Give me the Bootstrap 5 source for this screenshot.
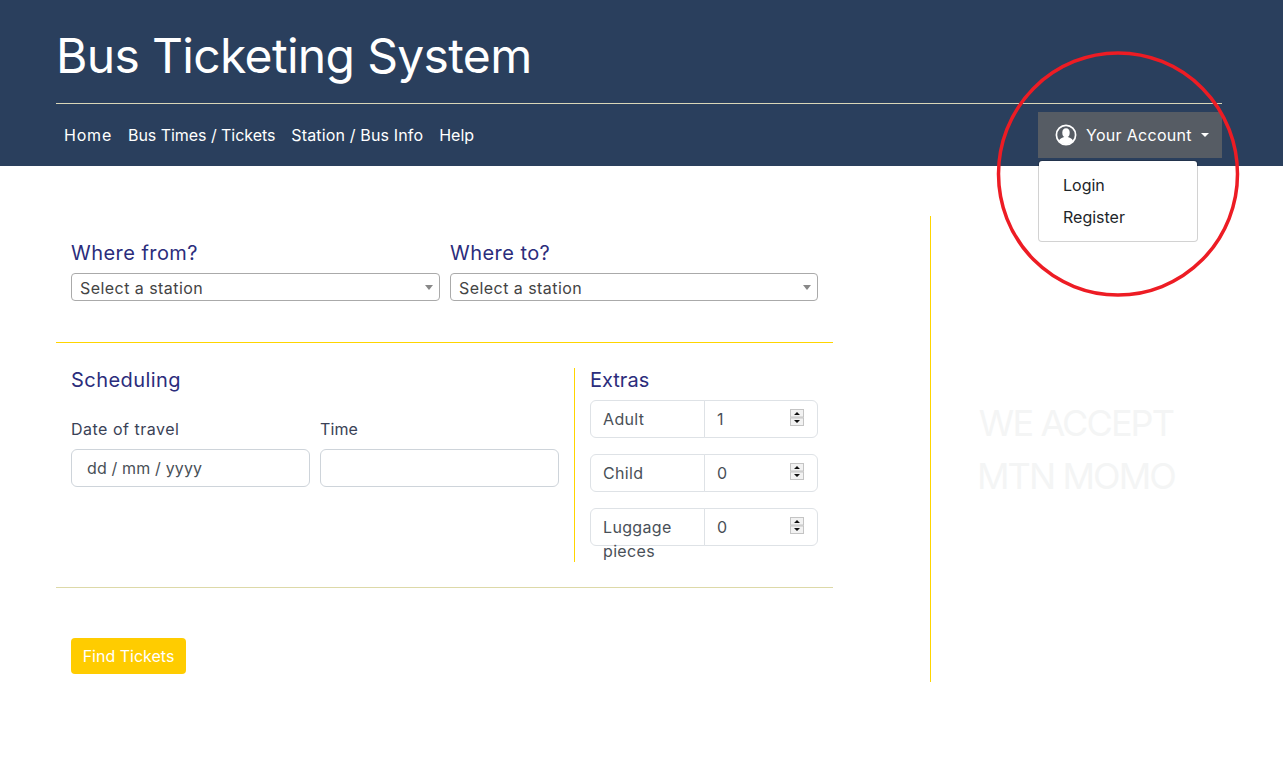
<!DOCTYPE html>
<html lang="en">
<head>
    <meta charset="UTF-8">
    <meta name="viewport" content="width=device-width, initial-scale=1.0">
    <title>Bus Ticketing System</title>
    <link href="https://cdn.jsdelivr.net/npm/bootstrap@5.3.0/dist/css/bootstrap.min.css" rel="stylesheet">
    <style>
        body { font-family: "Inter", "Open Sans", sans-serif; color: #495057; height: 768px; overflow: hidden; position: relative; }
        .site-head { background: #2a3f5d; height: 166px; padding: 27px 61px 0 56px; }
        .site-title { font-size: 48px; font-weight: 400; line-height: 57.6px; color: #fff; margin: 0; letter-spacing: -.67px; }
        .head-rule { height: 1px; background: #d9d6b8; margin-top: 18px; margin-bottom: 8px; }
        .site-head .nav-link { color: #fff; padding: 8px; font-size: 16px; line-height: 30px; }
        .site-head .link-home { letter-spacing: .8px; }
        .site-head .link-times { letter-spacing: -.05px; }
        .site-head .link-station { letter-spacing: .15px; }
        .account-btn { background: #565c64; color: #fff; width: 184px; height: 46px; border: 0; border-radius: 0; padding: 0 12px 0 17px; font-size: 16px; letter-spacing: .3px; }
        .account-btn:hover { background: #565c64; color: #fff; }
        .account-btn::after { margin-left: 9px; }
        .account-icon { margin-right: 9px; }
        .account-menu { width: 160px; min-width: 160px; top: 48px; left: 0; font-size: 16px; border-radius: 4px; }
        .account-menu .dropdown-item { color: #212529; padding: 4px 24px; line-height: 24px; }
        .page-main { padding: 50px 0 0 56px; }
        .form-side { width: 777px; margin-right: 97px; }
        .side-panel { border-left: 1px solid #ffd500; height: 466px; width: 300px; padding: 181px 0 0 46px; }
        .accept-text { font-size: 36px; line-height: 53px; color: #f4f5f5; white-space: nowrap; margin: 0; letter-spacing: -1.9px; }
        .route-row { padding: 25px 15px 41px; gap: 10px; }
        .route-col { width: 369px; }
        .route-col + .route-col { width: 368px; }
        .form-heading { font-size: 20px; line-height: 24px; font-weight: 400; color: #2b2d7c; margin: 0 0 8px; letter-spacing: .45px; }
        .station-pick { height: 28px; border: 1px solid #aaa; border-radius: 4px; padding: 1px 8px 0; font-size: 16px; line-height: 28px; color: #444; letter-spacing: .45px; }
        .pick-caret { width: 0; height: 0; border-style: solid; border-width: 5px 4px 0; border-color: #888 transparent transparent; margin-right: -2px; }
        .rule-yellow { height: 1px; background: #ffd500; }
        .rule-soft { height: 1px; background: #ddd9a8; }
        .options-row { margin-top: 25px; margin-bottom: 25px; }
        .schedule-col { width: 518px; padding: 0 15px; }
        .schedule-col .form-heading { margin-bottom: 25px; }
        .date-row { gap: 10px; }
        .date-field { flex: 1 1 0; }
        .extras-col { width: 259px; padding: 0 15px 16px; border-left: 1px solid #ffd500; }
        .extras-col .form-heading { letter-spacing: 0; }
        .field-label { font-size: 16px; line-height: 24px; color: #3a4256; margin-bottom: 8px; letter-spacing: .5px; }
        .date-field + .date-field .field-label { letter-spacing: .1px; }
        .field-input { height: 38px; font-size: 16px; color: #495057; border-color: #ced4da; }
        .date-input { padding-left: 15px; }
        .date-input::placeholder { color: #495057; opacity: 1; letter-spacing: .15px; }
        .count-group { margin-bottom: 16px; height: 38px; flex-wrap: nowrap; }
        .count-group:last-child { margin-bottom: 0; }
        .count-group .input-group-text { width: 115px; height: 38px; background: #fff; white-space: normal; align-items: flex-start; text-align: left; font-size: 16px; line-height: 24px; padding: 6px 12px; color: #495057; letter-spacing: .35px; }
        .count-group .form-control { height: 38px; font-size: 16px; color: #495057; }
        .count-group input::-webkit-inner-spin-button {
            -webkit-appearance: none;
            display: block;
            opacity: 1;
            width: 14px;
            height: 17px;
            margin-right: 1px;
            background: url("data:image/svg+xml,%3Csvg xmlns='http://www.w3.org/2000/svg' width='14' height='17'%3E%3Crect width='14' height='17' fill='%23efefef'/%3E%3Crect x='.5' y='.5' width='13' height='7.500' fill='%23f2f2f2' stroke='%23c4c4c4'/%3E%3Crect x='.5' y='9' width='13' height='7.500' fill='%23f2f2f2' stroke='%23c4c4c4'/%3E%3Cpath d='M7 3l3 3H4zM7 14l-3-3h6z' fill='%23111'/%3E%3C/svg%3E") no-repeat;
        }
        .find-btn { background: #ffcc00; color: #fff; border: 0; height: 36px; width: 115px; font-size: 16px; padding: 0; margin: 50px 0 0 15px; border-radius: 4px; }
        .find-btn:hover { background: #ffcc00; color: #fff; }
        .mark-ring { position: absolute; left: 996px; top: 51px; width: 244px; height: 246px; pointer-events: none; }
    </style>
</head>
<body>
    <header class="site-head">
        <h1 class="site-title">Bus Ticketing System</h1>
        <div class="head-rule"></div>
        <nav class="d-flex justify-content-between align-items-start">
            <ul class="nav">
                <li class="nav-item"><a class="nav-link link-home" href="#">Home</a></li>
                <li class="nav-item"><a class="nav-link link-times" href="#">Bus Times / Tickets</a></li>
                <li class="nav-item"><a class="nav-link link-station" href="#">Station / Bus Info</a></li>
                <li class="nav-item"><a class="nav-link" href="#">Help</a></li>
            </ul>
            <div class="position-relative">
                <button class="btn account-btn dropdown-toggle d-flex align-items-center" type="button">
                    <svg class="account-icon flex-shrink-0" width="22" height="22" viewBox="0 0 22 22">
                        <circle cx="11" cy="11" r="9.6" fill="none" stroke="#fff" stroke-width="1.7"/>
                        <ellipse cx="11" cy="8.8" rx="3.7" ry="4.5" fill="#fff"/>
                        <path d="M3.8 17c1-2.600 3.800-3.300 5.400-3.900h3.600c1.600.6 4.400 1.300 5.400 3.900a9.600 9.600 0 0 1-14.400 0z" fill="#fff"/>
                    </svg>
                    Your Account
                </button>
                <div class="dropdown-menu show account-menu">
                    <a class="dropdown-item" href="#">Login</a>
                    <a class="dropdown-item" href="#">Register</a>
                </div>
            </div>
        </nav>
    </header>

    <main class="page-main d-flex">
        <div class="form-side">
            <div class="d-flex route-row">
                <div class="route-col">
                    <h2 class="form-heading">Where from?</h2>
                    <div class="station-pick d-flex justify-content-between align-items-center"><span>Select a station</span><span class="pick-caret"></span></div>
                </div>
                <div class="route-col">
                    <h2 class="form-heading">Where to?</h2>
                    <div class="station-pick d-flex justify-content-between align-items-center"><span>Select a station</span><span class="pick-caret"></span></div>
                </div>
            </div>
            <div class="rule-yellow"></div>
            <div class="d-flex options-row">
                <div class="schedule-col">
                    <h2 class="form-heading">Scheduling</h2>
                    <div class="d-flex date-row">
                        <div class="date-field">
                            <div class="field-label">Date of travel</div>
                            <input type="text" class="form-control field-input date-input" placeholder="dd / mm / yyyy">
                        </div>
                        <div class="date-field">
                            <div class="field-label">Time</div>
                            <input type="text" class="form-control field-input">
                        </div>
                    </div>
                </div>
                <div class="extras-col">
                    <h2 class="form-heading">Extras</h2>
                    <div class="input-group count-group">
                        <span class="input-group-text">Adult</span>
                        <input type="number" class="form-control" value="1">
                    </div>
                    <div class="input-group count-group">
                        <span class="input-group-text">Child</span>
                        <input type="number" class="form-control" value="0">
                    </div>
                    <div class="input-group count-group">
                        <span class="input-group-text">Luggage pieces</span>
                        <input type="number" class="form-control" value="0">
                    </div>
                </div>
            </div>
            <div class="rule-soft"></div>
            <button class="btn find-btn" type="button">Find Tickets</button>
        </div>
        <aside class="side-panel">
            <div class="d-inline-block text-center">
                <p class="accept-text">WE ACCEPT</p>
                <p class="accept-text">MTN MOMO</p>
            </div>
        </aside>
    </main>

    <svg class="mark-ring" viewBox="0 0 244 246">
        <ellipse cx="122" cy="123" rx="119.500" ry="121" fill="none" stroke="#ed1c24" stroke-width="3.500"/>
    </svg>

    <script src="https://cdn.jsdelivr.net/npm/bootstrap@5.3.0/dist/js/bootstrap.bundle.min.js"></script>
</body>
</html>
